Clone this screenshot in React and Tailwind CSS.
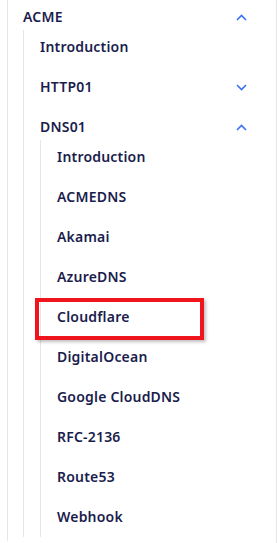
import React from 'react';

const dnsProviders = [
    'Introduction',
    'ACMEDNS',
    'Akamai',
    'AzureDNS',
    'Cloudflare',
    'DigitalOcean',
    'Google CloudDNS',
    'RFC-2136',
    'Route53',
    'Webhook',
];

function Chevron({ up }) {
    return (
        <span className="flex w-4 justify-center">
            <svg width="11" height="7" viewBox="0 0 11 7" fill="none">
                <path
                    d={up ? 'M1 6 L5.5 1.5 L10 6' : 'M1 1 L5.5 5.5 L10 1'}
                    stroke="#3a6ff7"
                    strokeWidth="1.6"
                />
            </svg>
        </span>
    );
}

function Row({ label, chevron, highlight }) {
    return (
        <div className="relative flex h-[40px] items-center justify-between">
            <span>{label}</span>
            {chevron && <Chevron up={chevron === 'up'} />}
            {/* red annotation box */}
            {highlight && (
                <div className="absolute -left-[22px] top-[1px] h-[42px] w-[169px] border-4 border-[#f0141c] shadow-[2px_2px_3px_rgba(0,0,0,0.25)]" />
            )}
        </div>
    );
}

function Children({ children }) {
    return (
        <div className="-mt-[7px] flex flex-col border-l border-[#e6e6e6] pl-4">
            <div className="-mt-[3px] flex flex-col">{children}</div>
        </div>
    );
}

export default function App() {
    return (
        <div
            className="h-[543px] w-[277px] overflow-hidden border-r border-[#e6e6e6] bg-white pl-[7px] text-[14px] font-semibold leading-5 tracking-[0.2px] text-[#1b1d4d]"
            style={{ fontFamily: '"Noto Sans", "Open Sans", sans-serif' }}
        >
            <div className="-mt-[3px] flex flex-col border-l border-[#e6e6e6] pb-[4px] pl-[15px] pr-[27px]">
                <Row label="ACME" chevron="up" />
                <Children>
                    <Row label="Introduction" />
                    <Row label="HTTP01" chevron="down" />
                    <Row label="DNS01" chevron="up" />
                    <Children>
                        {dnsProviders.map(name => (
                            <Row key={name} label={name} highlight={name === 'Cloudflare'} />
                        ))}
                    </Children>
                </Children>
            </div>
        </div>
    );
}
